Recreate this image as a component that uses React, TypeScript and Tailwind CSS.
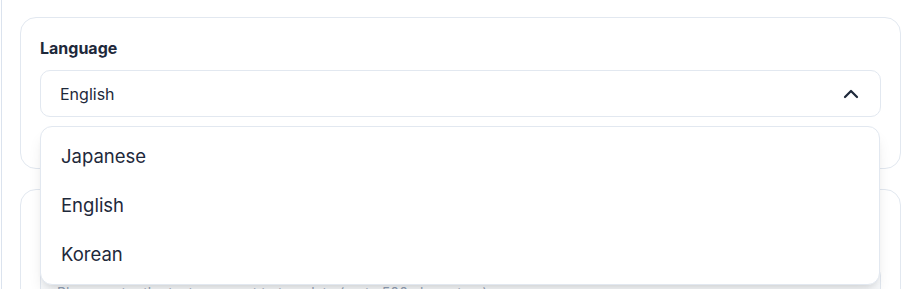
import React from "react";
import { ChevronUp } from "lucide-react";

export default function App() {
  const items = ["Japanese", "English", "Korean"];
  return (
    <div
      className="relative h-[289px] w-[916px] overflow-hidden bg-white text-[#1e293b]"
      style={{ fontFamily: "Inter, 'Noto Sans', sans-serif" }}
    >
      <div className="ml-px h-full border-l border-[#dbe3ee] pl-[18px] pr-[15px] pt-[17px]">
        <div className="rounded-2xl border border-[#e2e8f0] bg-white px-[19px] pb-[51px] pt-5">
          <div className="text-[16px] font-bold leading-5">Language</div>
          <div className="mt-3 flex h-[47px] items-center justify-between rounded-[10px] border border-[#e2e8f0] bg-white pl-[19px] pr-[17px]">
            <span className="text-[16px] leading-6">English</span>
            <ChevronUp size={24} strokeWidth={2.25} />
          </div>
        </div>
        <div className="mt-5 rounded-2xl border border-[#e2e8f0] bg-white px-[19px] pb-6 pt-[76px]">
          <div className="h-[120px] rounded-[10px] border border-[#e2e8f0] bg-[#f8fafc] px-4 py-4 text-sm leading-5 text-[#94a3b8]">
            Please enter the text you want to translate (up to 500 characters)
          </div>
        </div>
      </div>
      <div className="absolute left-[40px] top-[126px] w-[840px] rounded-xl border border-[#e2e8f0] bg-white py-[5px] shadow-lg">
        {items.map((it) => (
          <div key={it} className="flex h-[49px] items-center pl-5 text-[18.5px]">
            {it}
          </div>
        ))}
      </div>
    </div>
  );
}
